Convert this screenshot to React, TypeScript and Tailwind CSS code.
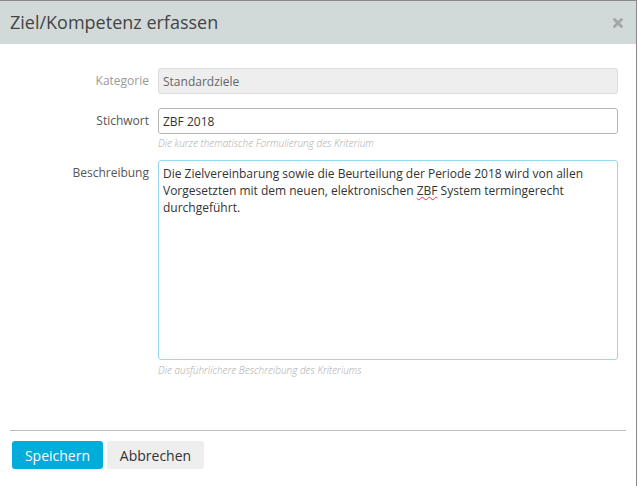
import { X } from "lucide-react";

const ZielDialog = () => {
  return (
    <div className="w-[638px] h-[486px] bg-white font-['Open_Sans',sans-serif] text-[12px] text-[#333]">
      <div className="w-[637px] h-[486px] border-t border-r border-[#8a8a8a] flex flex-col">
        {/* Header */}
        <div className="h-[43px] bg-[#d2dad9] flex items-center justify-between pl-[10px] pr-[11px]">
          <h1 className="text-[18px] text-[#444]">Ziel/Kompetenz erfassen</h1>
          <X className="w-[14px] h-[14px] text-[#a3a7a6]" strokeWidth={5} />
        </div>

        {/* Form */}
        <div className="pt-[24px] pr-[18px] flex flex-col">
          <div className="flex items-center gap-[9px]">
            <label className="w-[149px] text-right text-[#9a9a9a]">Kategorie</label>
            <input
              disabled
              value="Standardziele"
              className="flex-1 h-[26px] rounded-[3px] border border-[#dcdcdc] bg-[#eeeeee] px-[4px] text-[#666] outline-none"
            />
          </div>

          <div className="flex gap-[9px] mt-[14px]">
            <label className="w-[149px] text-right text-[#555] leading-[26px]">Stichwort</label>
            <div className="flex-1">
              <input
                defaultValue="ZBF 2018"
                className="w-full h-[26px] rounded-[3px] border border-[#b5b5b5] bg-white px-[4px] text-[#333] outline-none"
              />
              <p className="text-[10px] font-light italic text-[#aaa] mt-[2px] leading-[14px]">
                Die kurze thematische Formulierung des Kriterium
              </p>
            </div>
          </div>

          <div className="flex gap-[9px] mt-[10px]">
            <label className="w-[149px] text-right text-[#555] pt-[4px] leading-[17px]">Beschreibung</label>
            <div className="flex-1">
              <div className="h-[200px] rounded-[3px] border border-[#99d6f2] bg-white pl-[4px] pr-[5px] py-[4px] leading-[17px] text-[#333]">
                Die Zielvereinbarung sowie die Beurteilung der Periode 2018 wird von allen Vorgesetzten mit dem neuen, elektronischen{" "}
                <span className="underline decoration-wavy decoration-red-500 decoration-1">ZBF</span> System termingerecht durchgeführt.
              </div>
              <p className="text-[10px] font-light italic text-[#aaa] mt-[3px] leading-[14px]">
                Die ausführlichere Beschreibung des Kriteriums
              </p>
            </div>
          </div>
        </div>

        {/* Footer */}
        <div className="mt-auto px-[10px] pb-[17px]">
          <div className="border-t border-[#bdbdbd]" />
          <div className="flex gap-[4px] pt-[10px] pl-[2px]">
            <button className="h-[28px] w-[91px] rounded-[3px] bg-[#00acd9] text-white text-[14px]">
              Speichern
            </button>
            <button className="h-[28px] w-[97px] rounded-[3px] bg-[#eeeeee] text-[#333] text-[14px]">
              Abbrechen
            </button>
          </div>
        </div>
      </div>
    </div>
  );
};

export default ZielDialog;
